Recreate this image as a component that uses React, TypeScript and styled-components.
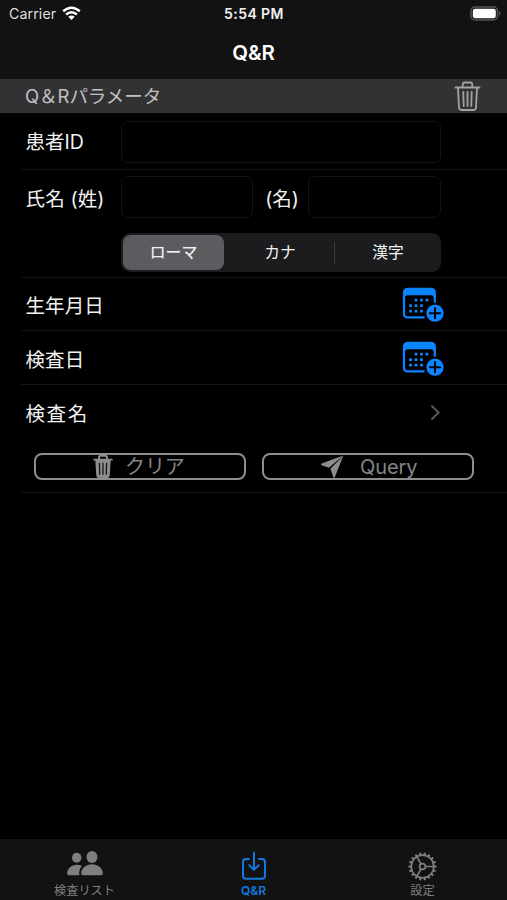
import React from "react";
import styled, { createGlobalStyle } from "styled-components";

const Global = createGlobalStyle`
  * { box-sizing: border-box; }
  html, body { margin: 0; background: #000; }
  body { font-family: Inter, "Noto Sans CJK JP", sans-serif; color: #f2f2f2; overflow: hidden; }
  button, input { font: inherit; color: inherit; margin: 0; }
  svg { display: block; flex: none; }
`;

const Screen = styled.div`
  width: 507px;
  height: 900px;
  display: flex;
  flex-direction: column;
  background: #000;
`;

const Header = styled.header`
  height: 79px;
  background: #121212;
`;

const StatusBar = styled.div`
  height: 28px;
  display: grid;
  grid-template-columns: 1fr auto 1fr;
  align-items: center;
  padding: 0 6px 0 9px;
  font-size: 14.2px;
  line-height: 28px;
`;

const Carrier = styled.div`
  display: flex;
  align-items: center;
  gap: 6px;
  color: #dedede;
  letter-spacing: 0.1px;

  svg { margin-top: -2px; }
`;

const Clock = styled.div`
  font-weight: 600;
  font-size: 14px;
  letter-spacing: 0.42px;
  padding-right: 2px;
`;

const Power = styled.div`
  display: flex;
  justify-content: flex-end;
  margin-top: -1px;
`;

const Title = styled.h1`
  margin: 0;
  text-align: center;
  font-size: 20.4px;
  line-height: 50px;
  font-weight: 600;
  letter-spacing: -0.1px;
  color: #fff;
`;

const SectionBar = styled.div`
  height: 34px;
  padding: 0 26px 0 25px;
  display: flex;
  align-items: center;
  justify-content: space-between;
  background: #323234;
  color: #c2c2c5;
  font-size: 18.5px;
  line-height: 34px;
`;

const SectionText = styled.span`
  letter-spacing: -0.05px;
`;

const Row = styled.div<{ $h: number; $top?: number }>`
  height: ${(p) => p.$h}px;
  margin-left: 21px;
  padding: ${(p) => p.$top ?? 0}px 0 0 4px;
  border-bottom: 1px solid #151515;
`;

const Fields = styled.div<{ $h: number }>`
  height: ${(p) => p.$h}px;
  width: 416px;
  display: flex;
  align-items: center;
`;

const Label = styled.label<{ $track?: number; $drop?: number }>`
  width: 95.5px;
  flex: none;
  padding: ${(p) => p.$drop ?? 2}px 0 0 0.5px;
  font-size: 19.5px;
  line-height: 28px;
  white-space: nowrap;
  letter-spacing: ${(p) => p.$track ?? 0}px;
`;

const GivenLabel = styled(Label)`
  width: 55px;
  padding-left: 12px;
`;

const Input = styled.input`
  flex: 1;
  min-width: 0;
  height: 42px;
  padding: 0 8px;
  border: 1px solid #141414;
  border-radius: 7px;
  background: #000;
  outline: none;
`;

const Segmented = styled.div`
  width: 320px;
  height: 39px;
  margin: 15px 0 0 96px;
  padding: 2px;
  display: grid;
  grid-template-columns: 101px 110px 1px 1fr;
  align-items: center;
  border-radius: 9px;
  background: #1c1c1e;
`;

const Segment = styled.button<{ $on?: boolean }>`
  height: 35px;
  padding: 0 0 0 ${(p) => (p.$on ? 0 : 2)}px;
  border: 0;
  border-radius: 8px;
  background: ${(p) => (p.$on ? "#5b5b60" : "transparent")};
  font-size: 15.8px;
  line-height: 35px;
  -webkit-text-stroke: ${(p) => (p.$on ? 0.2 : 0)}px currentColor;
`;

const Divider = styled.i`
  height: 22px;
  background: #3b3b3e;
`;

const ActionIcon = styled.div<{ $right?: number }>`
  margin-left: auto;
  margin-right: ${(p) => p.$right ?? 0}px;
`;

const Actions = styled.div`
  display: grid;
  grid-template-columns: 212px 212px;
  gap: 16px;
  margin: 13px 0 0 9px;
`;

const ActionButton = styled.button<{ $gap: number }>`
  height: 27px;
  padding: 0 0 0 57px;
  display: flex;
  align-items: center;
  gap: ${(p) => p.$gap}px;
  border: 2px solid #8d8d8f;
  border-radius: 8px;
  background: transparent;
  color: #858587;
  font-size: 20px;
  line-height: 23px;
`;

const ButtonText = styled.span`
  padding-top: 2px;
  letter-spacing: -0.1px;
`;

const TabBar = styled.nav`
  height: 61px;
  margin-top: auto;
  display: grid;
  grid-template-columns: repeat(3, 1fr);
  background: #121212;
`;

const Tab = styled.a<{ $on?: boolean }>`
  display: flex;
  flex-direction: column;
  align-items: center;
  color: ${(p) => (p.$on ? "#1479df" : "#7f7f7f")};
`;

const TabIcon = styled.div`
  height: 44px;
  padding-top: 11px;
`;

const TabText = styled.span<{ $bold?: boolean }>`
  font-size: ${(p) => (p.$bold ? 12 : 12.2)}px;
  font-weight: ${(p) => (p.$bold ? 600 : 400)};
  line-height: 15px;
`;

const Wifi = () => (
  <svg width="19" height="15" viewBox="0 0 19 15" fill="none" stroke="#fff" strokeWidth="2.5">
    <path d="M1.2 5.2Q9.5-1.8 17.8 5.2M4.1 8.5Q9.5 4.1 14.9 8.5" />
    <path d="M9.5 14L6.3 10.8Q9.5 8.2 12.7 10.8Z" fill="#fff" stroke="none" />
  </svg>
);

const Battery = () => (
  <svg width="31" height="16" viewBox="0 0 31 16">
    <rect x="1" y="1" width="26.5" height="13" rx="4" fill="none" stroke="#555" strokeWidth="1.5" />
    <rect x="2.8" y="2.8" width="23" height="9.5" rx="2.3" fill="#fff" />
    <path d="M29 5q3 2.5 0 5z" fill="#555" />
  </svg>
);

const Trash = () => (
  <svg width="27" height="32" viewBox="0 0 27 32" fill="none" stroke="#a3a3a5" strokeWidth="1.8" strokeLinecap="round" strokeLinejoin="round">
    <path d="M1.5 7.5h24M8.7 7V4.5Q8.7 2.5 10.7 2.5h5.6Q18.3 2.5 18.3 4.5v3M4 8l1 19.5Q5.2 30 7.4 30h12.2q2.2 0 2.4-2.5L23 8M9.3 12l.4 14M13.5 12v14M17.7 12l-.4 14" />
  </svg>
);

const TrashFill = () => (
  <svg width="20" height="23" viewBox="0 0 20 23">
    <path d="M6 4V2.5Q6 .8 7.8.8h4.4Q14 .8 14 2.5V4" fill="none" stroke="#8d8d8f" strokeWidth="2" />
    <path d="M1 3.8h18q.8 0 .8.9t-.8.9h-1.3l-1 15.2q-.2 2.2-2.4 2.2H5.7q-2.2 0-2.4-2.2L2.3 5.6H1q-.8 0-.8-.9t.8-.9z" fill="#8d8d8f" />
    <path d="M6.4 7.8l.3 12M10 7.8v12M13.6 7.8l-.3 12" stroke="#111" strokeWidth="1.2" />
  </svg>
);

const Plane = () => (
  <svg width="23" height="23" viewBox="0 0 23 23" fill="#8d8d8f">
    <path d="M22.2.4L.6 8.6Q-.4 9.4.6 10.2l7.4 2.6z" />
    <path d="M22.4.6L9.4 13.8l3 8.6q.8 1 1.4-.1z" />
  </svg>
);

const dots: [number, number][] = [
  [15, 13.5], [20.5, 13.5], [26, 13.5],
  [9.5, 19], [15, 19], [20.5, 19],
  [9.5, 24.5], [15, 24.5], [20.5, 24.5],
];

const CalendarAdd = () => (
  <svg width="43" height="37" viewBox="0 0 43 37">
    <g transform="translate(0 .7)" fill="#0a84ff">
      <path d="M33.8 16V8M23.5 30.7H7Q3 30.700 3 26.700V8" fill="none" stroke="#0a84ff" strokeWidth="2.2" />
      <path d="M1.9 11V6.5Q1.9 1 7 1h22.8q5.1 0 5.1 5.5V11h-2.1q0-2.5-2.8-2.5H6.8Q4 8.5 4 11z" />
      {dots.map(([x, y]) => (
        <rect key={`${x}-${y}`} x={x - 1.4} y={y - 1.4} width="2.8" height="2.8" rx=".6" />
      ))}
      <circle cx="34" cy="26.5" r="8.6" />
      <path d="M34 21.4v10.2M28.9 26.5h10.2" stroke="#000" strokeWidth="2" strokeLinecap="round" />
    </g>
  </svg>
);

const Chevron = () => (
  <svg width="10" height="16" viewBox="0 0 10 16" fill="none" stroke="#58585a" strokeWidth="2" strokeLinecap="round" strokeLinejoin="round">
    <path d="M1 1.2L7.6 7.5L1 14" />
  </svg>
);

const People = () => (
  <svg width="38" height="27" viewBox="0 0 38 27" fill="#7f7f7f">
    <ellipse cx="10.7" cy="7.8" rx="4.7" ry="5" />
    <path d="M3 25.3q-1.9 0-1.9-1.8C1.1 19 5.2 14.7 10.7 14.7q3.2 0 5.3 1.2-3.3 3.4-2.8 8.7l.3.7z" />
    <ellipse cx="26" cy="7" rx="5.5" ry="5.9" />
    <path d="M17 25.3q-1.9 0-1.9-1.8C15.1 18.7 19.6 14.3 26 14.3s10.9 4.4 10.9 9.2q0 1.8-1.9 1.8z" />
  </svg>
);

const Download = () => (
  <svg width="26" height="31" viewBox="0 0 26 31" fill="none" stroke="#1479df" strokeWidth="2" strokeLinecap="round" strokeLinejoin="round">
    <path d="M8 9H5Q2 9 2 12v13.7q0 3 3 3h16q3 0 3-3V12q0-3-3-3h-3M13 2.5v17M8.2 15.2l4.8 4.5 4.8-4.5" />
  </svg>
);

const Gear = () => (
  <svg width="30" height="31" viewBox="0 0 30 31" fill="none" stroke="#7f7f7f" strokeWidth="1.7">
    <circle cx="14.5" cy="16.5" r="11.3" />
    <circle cx="14.5" cy="16.5" r="2.9" />
    <path d="M17.5 16.5h8.3M13 14L8.8 6.7M13 19l-4.2 7.3" />
    {Array.from({ length: 18 }, (_, i) => (
      <path key={i} d="M14.5 5.3V2.5" strokeWidth="2" transform={`rotate(${i * 20 + 10} 14.5 16.5)`} />
    ))}
  </svg>
);

export default function App() {
  return (
    <>
      <Global />
      <Screen>
        <Header>
          <StatusBar>
            <Carrier>Carrier <Wifi /></Carrier>
            <Clock>5:54 PM</Clock>
            <Power><Battery /></Power>
          </StatusBar>
          <Title>Q&amp;R</Title>
        </Header>
        <SectionBar>
          <SectionText>Q＆Rパラメータ</SectionText>
          <Trash />
        </SectionBar>
        <Row $h={57}>
          <Fields $h={57}>
            <Label $drop={0}>患者ID</Label>
            <Input aria-label="患者ID" />
          </Fields>
        </Row>
        <Row $h={108} $top={6}>
          <Fields $h={42}>
            <Label $drop={4} $track={0.15}>氏名 (姓)</Label>
            <Input aria-label="姓" />
            <GivenLabel $drop={4}>(名)</GivenLabel>
            <Input aria-label="名" />
          </Fields>
          <Segmented>
            <Segment $on>ローマ</Segment>
            <Segment>カナ</Segment>
            <Divider />
            <Segment>漢字</Segment>
          </Segmented>
        </Row>
        <Row $h={53}>
          <Fields $h={53}>
            <Label $track={0.1}>生年月日</Label>
            <ActionIcon $right={-3}><CalendarAdd /></ActionIcon>
          </Fields>
        </Row>
        <Row $h={54}>
          <Fields $h={54}>
            <Label $drop={3} $track={0.1}>検査日</Label>
            <ActionIcon $right={-3}><CalendarAdd /></ActionIcon>
          </Fields>
        </Row>
        <Row $h={108}>
          <Fields $h={55}>
            <Label $track={1.6}>検査名</Label>
            <ActionIcon><Chevron /></ActionIcon>
          </Fields>
          <Actions>
            <ActionButton $gap={12}><TrashFill /><ButtonText>クリア</ButtonText></ActionButton>
            <ActionButton $gap={16}><Plane /><ButtonText>Query</ButtonText></ActionButton>
          </Actions>
        </Row>
        <TabBar>
          <Tab>
            <TabIcon><People /></TabIcon>
            <TabText>検査リスト</TabText>
          </Tab>
          <Tab $on>
            <TabIcon><Download /></TabIcon>
            <TabText $bold>Q&amp;R</TabText>
          </Tab>
          <Tab>
            <TabIcon><Gear /></TabIcon>
            <TabText>設定</TabText>
          </Tab>
        </TabBar>
      </Screen>
    </>
  );
}
